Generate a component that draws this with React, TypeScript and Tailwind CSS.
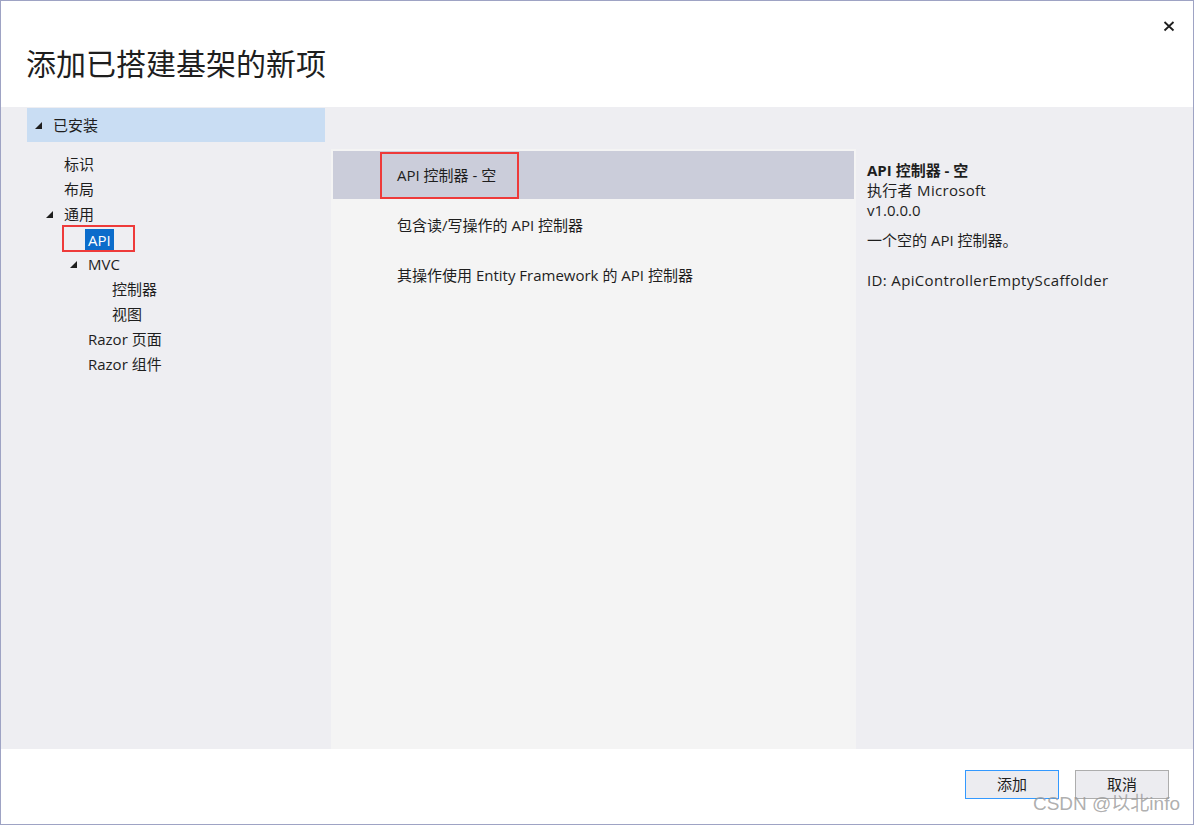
import React from 'react';

const Tri = () => (
  <svg width="7" height="7" viewBox="0 0 7 7" className="block">
    <polygon points="7,0 7,7 0,7" fill="#1e1e1e" />
  </svg>
);

const App = () => {
  const tree = [
    { label: '标识', pl: 'pl-[45px]', open: false },
    { label: '布局', pl: 'pl-[45px]', open: false },
    { label: '通用', pl: 'pl-[45px]', open: true },
    { label: 'API', pl: 'pl-[69px]', open: false, selected: true },
    { label: 'MVC', pl: 'pl-[69px]', open: true },
    { label: '控制器', pl: 'pl-[93px]', open: false },
    { label: '视图', pl: 'pl-[93px]', open: false },
    { label: 'Razor 页面', pl: 'pl-[69px]', open: false },
    { label: 'Razor 组件', pl: 'pl-[69px]', open: false },
  ];

  const templates = [
    'API 控制器 - 空',
    '包含读/写操作的 API 控制器',
    '其操作使用 Entity Framework 的 API 控制器',
  ];

  return (
    <div className="relative w-[1194px] h-[825px] border border-[#9ea3c4] bg-white flex flex-col text-[#1e1e1e] text-[15px] font-['Open_Sans','Noto_Sans_CJK_SC',sans-serif]">
      {/* header */}
      <div className="relative h-[106px] shrink-0 pl-[25px] pt-[43px]">
        <h1 className="text-[30px] leading-[40px] font-normal text-[#1e1e1e]">添加已搭建基架的新项</h1>
        <button className="absolute right-[18px] top-[19px] w-[12px] h-[12px]">
          <svg width="12" height="12" viewBox="0 0 12 12">
            <path d="M1.5 2 L10.5 10.5 M10.5 2 L1.5 10.5" stroke="#1e1e1e" strokeWidth="1.8" />
          </svg>
        </button>
      </div>

      {/* body */}
      <div className="flex-1 flex bg-[#eeeef2] min-h-0">
        {/* left tree */}
        <div className="w-[330px] shrink-0 pt-[1px]">
          <div className="ml-[26px] w-[298px] h-[34px] bg-[#c9ddf3] flex items-center pl-[8px]">
            <Tri />
            <span className="ml-[11px]">已安装</span>
          </div>
          <div className="pt-[10px]">
            {tree.map((item, i) => (
              <div key={i} className={`relative h-[25px] flex items-center ${item.pl}`}>
                <div className="w-[18px] shrink-0">{item.open && <Tri />}</div>
                {item.selected ? (
                  <>
                    <span className="-ml-[3px] px-[3px] bg-[#0b6ccb] text-white leading-[22px]">{item.label}</span>
                    <div className="absolute left-[61px] top-[-2px] w-[73px] h-[27px] border-2 border-[#ee3a3a]"></div>
                  </>
                ) : (
                  <span>{item.label}</span>
                )}
              </div>
            ))}
          </div>
        </div>

        {/* middle list */}
        <div className="w-[525px] shrink-0 mt-[42px] bg-[#f4f4f4] p-[2px] flex flex-col gap-[2px]">
          {templates.map((t, i) => (
            <div
              key={i}
              className={`relative h-[48px] flex items-center pl-[64px] pr-[2px] ${i === 0 ? 'bg-[#cbcdda]' : ''}`}
            >
              <span>{t}</span>
              {i === 0 && (
                <div className="absolute left-[47px] top-[1px] w-[139px] h-[47px] border-2 border-[#ee3a3a]"></div>
              )}
            </div>
          ))}
        </div>

        {/* right details */}
        <div className="flex-1 pl-[11px] pt-[53px] leading-[20px]">
          <div className="font-bold">API 控制器 - 空</div>
          <div className="tracking-[0.3px]">执行者 Microsoft</div>
          <div>v1.0.0.0</div>
          <div className="mt-[10px]">一个空的 API 控制器。</div>
          <div className="mt-[20px] tracking-[0.35px]">ID: ApiControllerEmptyScaffolder</div>
        </div>
      </div>

      {/* footer */}
      <div className="h-[75px] shrink-0 flex justify-end items-start pt-[21px] pr-[24px] gap-[16px]">
        <button className="w-[94px] h-[29px] bg-[#ececf0] border border-[#3399ff] text-[15px]">添加</button>
        <button className="w-[94px] h-[29px] bg-[#ececf0] border border-[#adadad] text-[15px]">取消</button>
      </div>

      <div className="absolute right-[13px] bottom-[8px] text-[19px] leading-[24px] text-[#9a9a9a]/80 font-['Liberation_Sans','Noto_Sans_CJK_SC',sans-serif] pointer-events-none">
        CSDN @以北info
      </div>
    </div>
  );
};

export default App;
